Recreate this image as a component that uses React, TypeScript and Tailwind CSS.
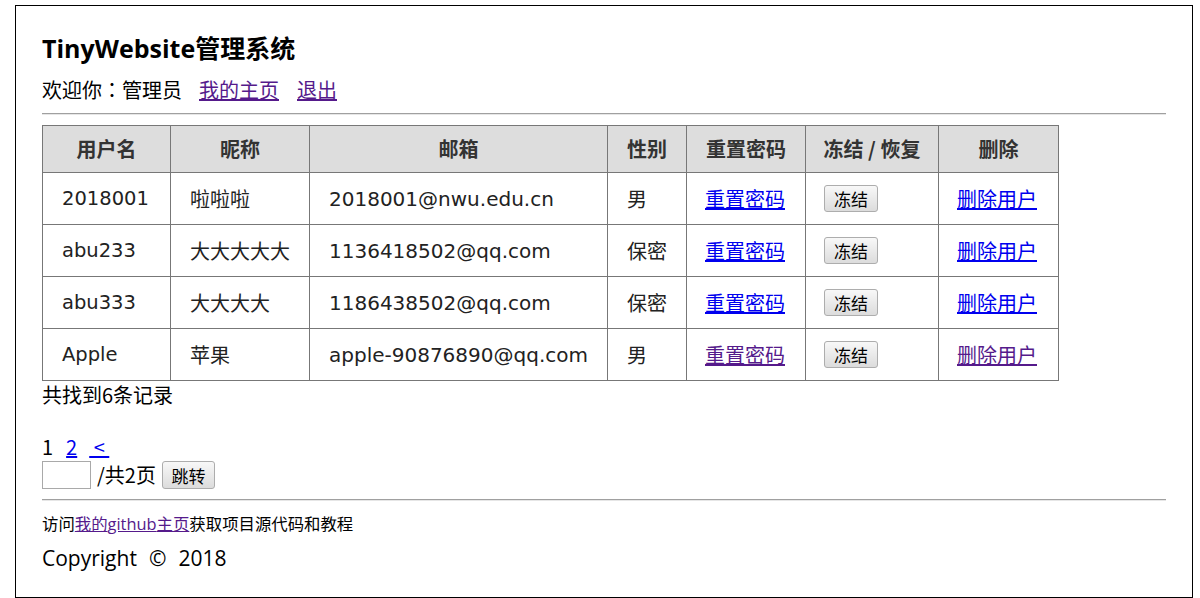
const rows = [
  { id: '2018001', nick: '啦啦啦', email: '2018001@nwu.edu.cn', sex: '男', visited: false },
  { id: 'abu233', nick: '大大大大大', email: '1136418502@qq.com', sex: '保密', visited: false },
  { id: 'abu333', nick: '大大大大', email: '1186438502@qq.com', sex: '保密', visited: false },
  { id: 'Apple', nick: '苹果', email: 'apple-90876890@qq.com', sex: '男', visited: true },
]

const cjk = "font-['Noto_Sans_CJK_SC',sans-serif]"

export default function App() {
  return (
    <div className={`min-h-[598px] bg-white text-black ${cjk}`}>
      <div className="ml-[15px] mt-[5px] w-[1178px] border border-black px-[26px] pt-[24px] pb-[25px]">
        <div className="h-[36px] text-[25px] font-bold leading-[36px] font-['Open_Sans','Noto_Sans_CJK_SC',sans-serif]">
          TinyWebsite管理系统
        </div>
        <div className="mt-[10px] flex h-[28px] items-center text-[20px] leading-[28px] font-['Noto_Sans_CJK_JP',sans-serif]">
          <span>欢迎你：管理员</span>
          <a href="#" className="ml-[17px] text-[#551a8b] underline">我的主页</a>
          <a href="#" className="ml-[18px] text-[#551a8b] underline">退出</a>
        </div>
        <div className="mt-[9px] border-t border-b border-t-[#a0a0a0] border-b-[#e6e6e6]" />

        <table className="mt-[10px] w-[1016px] table-fixed border-collapse text-[20px]">
          <colgroup>
            <col className="w-[128px]" />
            <col className="w-[139px]" />
            <col className="w-[298px]" />
            <col className="w-[79px]" />
            <col className="w-[119px]" />
            <col className="w-[133px]" />
            <col className="w-[120px]" />
          </colgroup>
          <thead>
            <tr className="h-[47px] bg-[#dddddd] text-[#333]">
              {['用户名', '昵称', '邮箱', '性别', '重置密码', '冻结 / 恢复', '删除'].map(h => (
                <th key={h} className="border border-[#777] p-0 text-center font-bold">{h}</th>
              ))}
            </tr>
          </thead>
          <tbody className="text-[#222]">
            {rows.map(r => (
              <tr key={r.id} className="h-[52px]">
                <td className="border border-[#777] px-[19px] font-['DejaVu_Sans','Noto_Sans_CJK_SC',sans-serif] text-[19.5px]">{r.id}</td>
                <td className="border border-[#777] px-[19px]">{r.nick}</td>
                <td className="border border-[#777] px-[19px] font-['DejaVu_Sans','Noto_Sans_CJK_SC',sans-serif] text-[20px]">{r.email}</td>
                <td className="border border-[#777] px-[19px]">{r.sex}</td>
                <td className="border border-[#777] px-[18px]">
                  <a href="#" className={`underline ${r.visited ? 'text-[#551a8b]' : 'text-[#0000ee]'}`}>重置密码</a>
                </td>
                <td className="border border-[#777] px-[18px]">
                  <button className="flex h-[27px] w-[54px] items-center justify-center rounded-[3px] border border-[#adadad] bg-gradient-to-b from-[#f8f8f8] to-[#dcdcdc] text-[17px] leading-none text-black">
                    冻结
                  </button>
                </td>
                <td className="border border-[#777] px-[18px]">
                  <a href="#" className={`underline ${r.visited ? 'text-[#551a8b]' : 'text-[#0000ee]'}`}>删除用户</a>
                </td>
              </tr>
            ))}
          </tbody>
        </table>

        <div className="h-[28px] text-[20px] leading-[28px]">共找到6条记录</div>
        <div className="mt-[24px] flex h-[28px] items-center text-[20px] leading-[28px]">
          <span>1</span>
          <a href="#" className="ml-[13px] text-[#0000ee] underline">2</a>
          <a href="#" className="ml-[12px] text-[#0000ee] underline">&nbsp;&lt;&nbsp;</a>
        </div>
        <div className="flex h-[28px] items-center text-[20px]">
          <input className="h-[28px] w-[49px] border border-[#a9a9a9] bg-white outline-none" />
          <span className="ml-[6px]">/共2页</span>
          <button className="ml-[6px] flex h-[28px] w-[53px] items-center justify-center rounded-[3px] border border-[#adadad] bg-gradient-to-b from-[#f8f8f8] to-[#dcdcdc] text-[17px] leading-none">
            跳转
          </button>
        </div>
        <div className="mt-[10px] border-t border-b border-t-[#a0a0a0] border-b-[#e6e6e6]" />
        <div className="mt-[10px] h-[24px] text-[16.4px] leading-[24px]">
          访问<a href="#" className="text-[#551a8b] underline">我的<span className="font-['Open_Sans',sans-serif]">github</span>主页</a>获取项目源代码和教程
        </div>
        <div className="mt-[9px] flex h-[28px] items-center text-[21px] leading-[28px] font-['Open_Sans','Noto_Sans_CJK_SC',sans-serif]">
          <span>Copyright</span>
          <span className="ml-[12px]">©</span>
          <span className="ml-[12px]">2018</span>
        </div>
      </div>
    </div>
  )
}
